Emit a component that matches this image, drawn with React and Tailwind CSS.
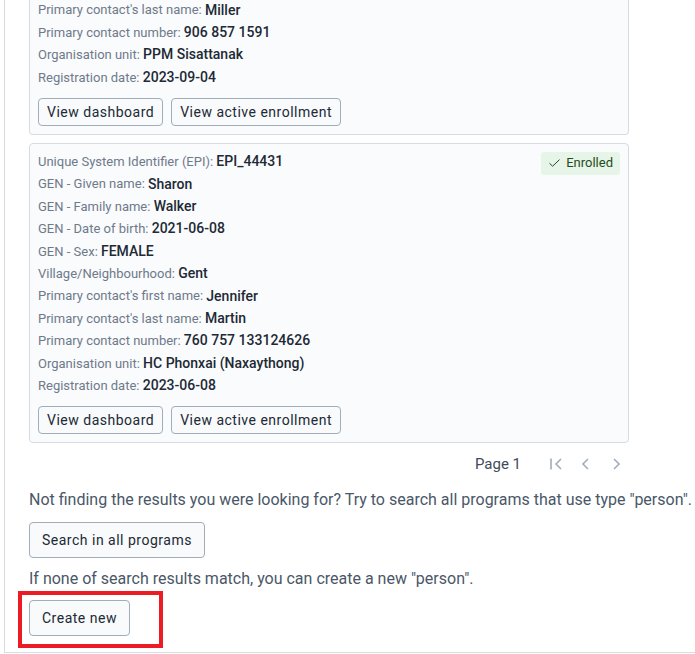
import React from 'react'

const cards = [
  {
    id: 'miller',
    clipped: true,
    rows: [
      ["Primary contact's last name", 'Miller'],
      ['Primary contact number', '906 857 1591'],
      ['Organisation unit', 'PPM Sisattanak'],
      ['Registration date', '2023-09-04'],
    ],
  },
  {
    id: 'walker',
    enrolled: true,
    rows: [
      ['Unique System Identifier (EPI)', 'EPI_44431'],
      ['GEN - Given name', 'Sharon'],
      ['GEN - Family name', 'Walker'],
      ['GEN - Date of birth', '2021-06-08'],
      ['GEN - Sex', 'FEMALE'],
      ['Village/Neighbourhood', 'Gent'],
      ["Primary contact's first name", 'Jennifer'],
      ["Primary contact's last name", 'Martin'],
      ['Primary contact number', '760 757 133124626'],
      ['Organisation unit', 'HC Phonxai (Naxaythong)'],
      ['Registration date', '2023-06-08'],
    ],
  },
]

function SmallButton({ children }) {
  return (
    <button className="h-[28px] px-[8px] rounded-[4px] border border-[#a0adba] bg-[#f8fafc] text-[14px] text-[#212934] tracking-[0.5px] leading-none">
      {children}
    </button>
  )
}

function BigButton({ children }) {
  return (
    <button className="h-[36px] px-[12px] rounded-[4px] border border-[#a0adba] bg-[#f8fafc] text-[14px] text-[#212934] tracking-[0.5px] leading-none">
      {children}
    </button>
  )
}

function ResultCard({ card }) {
  return (
    <div
      className={
        card.clipped
          ? 'relative w-[600px] -mt-[1px] px-[8px] pb-[8px] bg-[#fafbfd] border border-t-0 border-[#d5dce3] rounded-b-[4px]'
          : 'relative w-[600px] px-[8px] pt-[7px] pb-[8px] bg-[#fafbfd] border border-[#d5dce3] rounded-[4px]'
      }
    >
      {card.enrolled && (
        <div className="absolute top-[8px] right-[8px] h-[23px] px-[7px] flex items-center gap-[5px] rounded-[3px] bg-[#e7f4e8] text-[13px] text-[#1f4d22]">
          <svg width="13" height="12" viewBox="0 0 13 12" fill="none">
            <path d="M1.5 6.3 L4.6 9.2 L11.5 2.6" stroke="#1f4d22" strokeWidth="1" />
          </svg>
          Enrolled
        </div>
      )}

      {card.rows.map(([label, value]) => (
        <div key={label} className="h-[22.4px] flex items-center whitespace-nowrap">
          <span className="text-[13px] text-[#6e7a8a]">{label}:&nbsp;</span>
          <span className="text-[14px] font-medium text-[#212934]">{value}</span>
        </div>
      ))}

      <div className="mt-[9px] flex gap-[8px]">
        <SmallButton>View dashboard</SmallButton>
        <SmallButton>View active enrollment</SmallButton>
      </div>
    </div>
  )
}

export default function App() {
  return (
    <div className="h-[654px] overflow-hidden bg-white font-['Roboto',sans-serif]">
      <div className="ml-[4px] pl-[24px] pb-[16px] border-l border-b border-[#d5dce3]">

        {/* RESULTS */}
        <div className="flex flex-col gap-[8px]">
          {cards.map((card) => (
            <ResultCard key={card.id} card={card} />
          ))}
        </div>

        {/* PAGINATION */}
        <div className="w-[600px] mt-[8px] h-[26px] flex items-center justify-end pr-[5px]">
          <span className="text-[15px] text-[#404b5a]">Page 1</span>
          <div className="ml-[27px] flex items-center gap-[14px] text-[#a0adba]">
            <svg width="16" height="16" viewBox="0 0 16 16" fill="none" stroke="currentColor" strokeWidth="1.6">
              <path d="M3 2.5 V13.5" />
              <path d="M13 3 L8 8 L13 13" />
            </svg>
            <svg width="16" height="16" viewBox="0 0 16 16" fill="none" stroke="currentColor" strokeWidth="1.6">
              <path d="M10 3 L5 8 L10 13" />
            </svg>
            <svg width="16" height="16" viewBox="0 0 16 16" fill="none" stroke="currentColor" strokeWidth="1.6">
              <path d="M6 3 L11 8 L6 13" />
            </svg>
          </div>
        </div>

        {/* FALLBACK */}
        <p className="mt-[12px] text-[16px] leading-[22px] text-[#4a5768] whitespace-nowrap">
          Not finding the results you were looking for? Try to search all programs that use type "person".
        </p>
        <div className="mt-[11px]">
          <BigButton>Search in all programs</BigButton>
        </div>
        <p className="mt-[10px] text-[16px] leading-[22px] text-[#4a5768] whitespace-nowrap">
          If none of search results match, you can create a new "person".
        </p>
        <div className="relative mt-[10px] w-fit">
          <BigButton>Create new</BigButton>
          {/* HIGHLIGHT */}
          <div className="absolute -left-[11px] -top-[9px] w-[145px] h-[57px] border-[4px] border-[#ec1c24] pointer-events-none"></div>
        </div>

      </div>
    </div>
  )
}
